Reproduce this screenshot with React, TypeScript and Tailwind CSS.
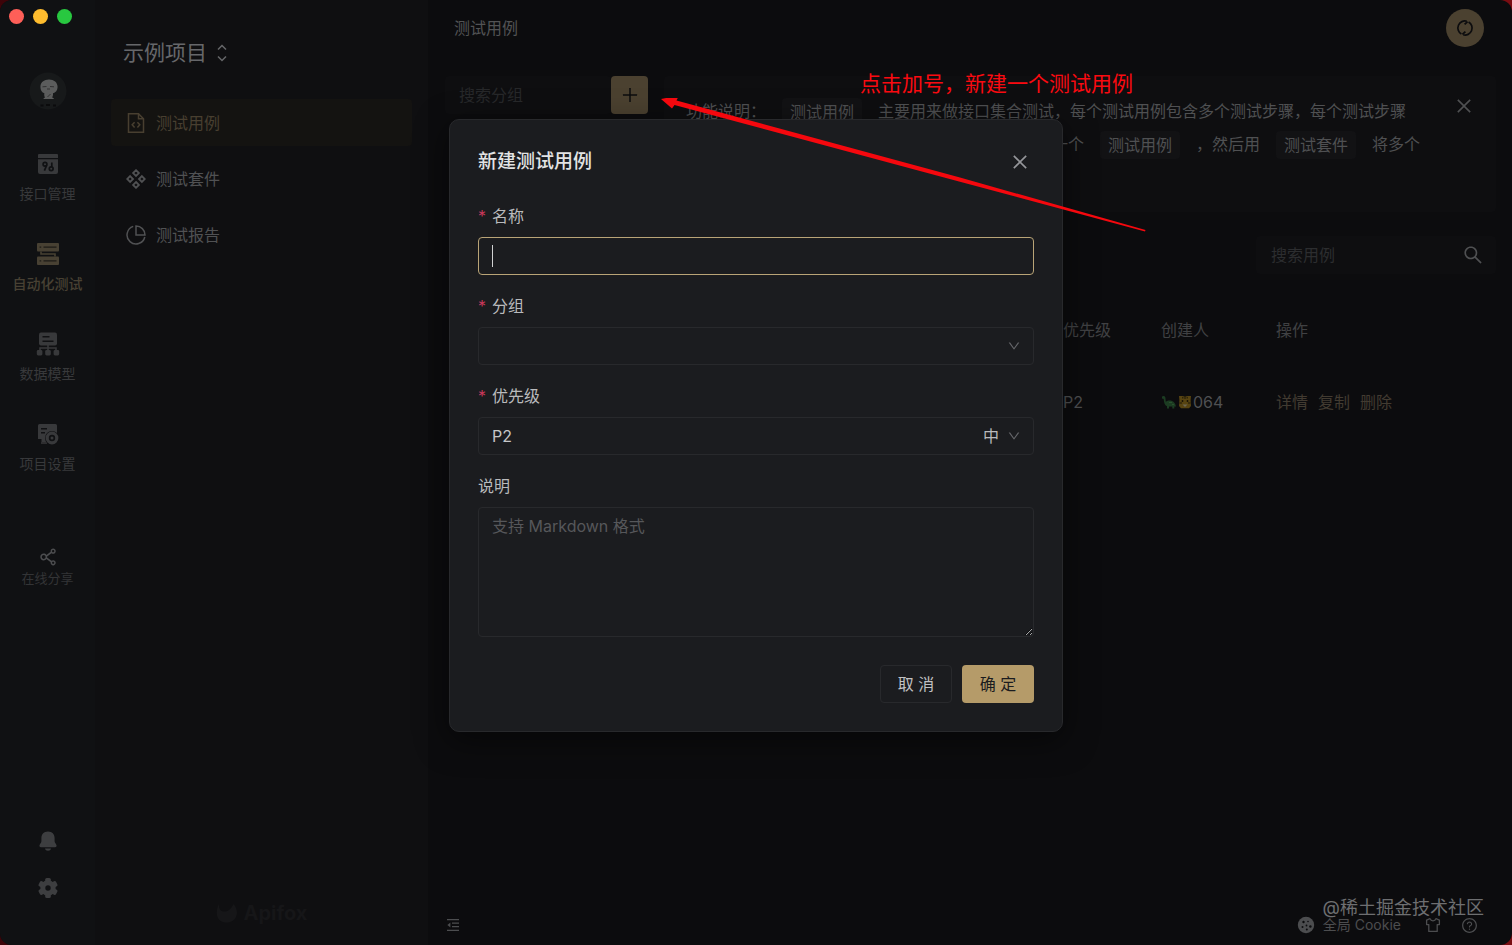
import type { ReactNode } from "react";
import {
  AiOutlineClose,
  AiOutlineDown,
  AiOutlinePlus,
  AiOutlineQuestionCircle,
  AiOutlineSearch,
  AiOutlineShareAlt,
} from "react-icons/ai";

function ApiIcon() {
  return (
    <svg viewBox="0 0 22 22" className="size-[22px]" fill="currentColor" aria-hidden="true">
      <path d="M2 1h18a1 1 0 0 1 1 1v3H1V2a1 1 0 0 1 1-1z" />
      <path d="M1 6.2h20V19a2 2 0 0 1-2 2H3a2 2 0 0 1-2-2z" />
      <g fill="none" stroke="#101113" strokeWidth="1.7">
        <circle cx="8" cy="11.2" r="1.9" />
        <path d="M9.6 12.4 7.4 17.6" />
        <circle cx="14.2" cy="15.8" r="1.9" />
        <path d="M14.8 13.8V9.4" />
      </g>
    </svg>
  );
}

function AutoTestIcon() {
  return (
    <svg viewBox="0 0 24 24" className="size-6" aria-hidden="true">
      <g fill="currentColor">
        <rect x="1" y="1" width="22" height="8.4" rx="1" />
        <rect x="1" y="14.6" width="22" height="8.4" rx="1" />
      </g>
      <path d="M5 9.4v2.6h14v2.6" fill="none" stroke="currentColor" strokeWidth="1.6" />
      <g stroke="#1d1b17" strokeWidth="1.2">
        <path d="M7.5 5.2h13M7.5 18.8h13M3.6 5.2h1.6M3.6 18.8h1.6" />
      </g>
    </svg>
  );
}

function ModelIcon() {
  return (
    <svg viewBox="0 0 24 24" className="size-6" fill="currentColor" aria-hidden="true">
      <rect x="3" y="0.5" width="18" height="13" rx="2" />
      <path d="M6.5 4.8h7M6.5 9.2h11" stroke="#101113" strokeWidth="1.6" />
      <path d="M12 13v5M4 19v-3h16v3" fill="none" stroke="currentColor" strokeWidth="1.6" />
      <rect x="0.8" y="18" width="5.6" height="5.4" rx="1.4" />
      <rect x="9.2" y="18" width="5.6" height="5.4" rx="1.4" />
      <rect x="17.6" y="18" width="5.6" height="5.4" rx="1.4" />
    </svg>
  );
}

function ProjectIcon() {
  return (
    <svg viewBox="0 0 22 22" className="size-[22px]" aria-hidden="true">
      <path d="M2.5 1h16A1.5 1.5 0 0 1 20 2.5V19H4.5v-3H1V2.5A1.5 1.5 0 0 1 2.5 1z" fill="currentColor" />
      <path d="M4 5.8h6M4 9.8h4" stroke="#101113" strokeWidth="1.5" />
      <path d="M4 20h6" stroke="currentColor" strokeWidth="1.5" />
      <circle cx="15" cy="15" r="7" fill="#101113" />
      <circle cx="15" cy="15" r="4.8" fill="none" stroke="currentColor" strokeWidth="3.2" />
      <circle cx="15" cy="15" r="1.5" fill="currentColor" />
    </svg>
  );
}

function BellIcon() {
  return (
    <svg viewBox="0 0 20 22" className="h-[22px] w-5" fill="currentColor" aria-hidden="true">
      <path d="M10 1.5c4 0 6.6 2.8 6.600 6.500v3.200c0 1.600 2 3 2 4.600 0 .9-.6 1.400-1.500 1.400H2.900c-.9 0-1.500-.5-1.500-1.400 0-1.600 2-3 2-4.600V8c0-3.700 2.600-6.500 6.600-6.500z" />
      <path d="M7 18.600h6c-.3 1.400-1.400 2.200-3 2.200s-2.700-.8-3-2.200z" />
    </svg>
  );
}

function GearIcon() {
  const teeth = [0, 60, 120, 180, 240, 300];
  return (
    <svg viewBox="0 0 22 22" className="size-[22px]" aria-hidden="true">
      <circle cx="11" cy="11" r="5.2" fill="none" stroke="currentColor" strokeWidth="5" />
      {teeth.map((a) => (
        <rect key={a} x="8.200" y="1" width="5.600" height="5" rx="1.500" fill="currentColor" transform={`rotate(${a} 11 11)`} />
      ))}
    </svg>
  );
}

function CaseIcon() {
  return (
    <svg viewBox="0 0 20 22" className="h-[22px] w-5" fill="none" stroke="currentColor" strokeWidth="1.5" aria-hidden="true">
      <path d="M2.500 1.800h10l5 5v13.400h-15z" />
      <path d="M12.500 1.800v5h5" />
      <path d="m8.600 10.200-2.400 2.600 2.400 2.600M11.400 10.200l2.400 2.600-2.400 2.600" />
    </svg>
  );
}

function SuiteIcon() {
  return (
    <svg viewBox="0 0 20 20" className="size-5" fill="none" stroke="currentColor" strokeWidth="1.8" aria-hidden="true">
      <path d="m10 1.200 2.900 2.900L10 7 7.100 4.100zM10 13l2.900 2.900-2.900 2.900-2.900-2.900zM4.100 7.100 7 10l-2.900 2.900L1.200 10zM15.900 7.100l2.900 2.900-2.900 2.900L13 10z" />
    </svg>
  );
}

function ReportIcon() {
  return (
    <svg viewBox="0 0 20 20" className="size-5" fill="none" stroke="currentColor" strokeWidth="1.5" aria-hidden="true">
      <path d="M7.200 1.400A9 9 0 1 0 18.800 12" />
      <path d="M10 1a9 9 0 0 1 9 9h-9z" />
    </svg>
  );
}

function SyncIcon() {
  return (
    <svg viewBox="0 0 18 18" className="size-[18px]" fill="none" stroke="currentColor" strokeWidth="1.7" aria-hidden="true">
      <path d="M5.400 15A7 7 0 0 1 10.800 2.200M12.600 3A7 7 0 0 1 7.200 15.800" />
      <path d="M8.600 5.400 11.600 2.600M9.400 12.600 6.400 15.400" strokeWidth="1.8" />
    </svg>
  );
}

function CookieIcon() {
  return (
    <svg viewBox="0 0 18 18" className="size-[18px]" aria-hidden="true">
      <circle cx="9" cy="9" r="8.200" fill="currentColor" />
      <g fill="#0c0c0e">
        <circle cx="6.500" cy="6" r="1.200" />
        <circle cx="11" cy="5.500" r=".8" />
        <circle cx="5.500" cy="11" r="1" />
        <circle cx="9.500" cy="9.500" r=".9" />
        <circle cx="13.400" cy="10.500" r="1.200" />
        <circle cx="9.800" cy="13.600" r="1" />
      </g>
    </svg>
  );
}

function ShirtIcon() {
  return (
    <svg viewBox="0 0 16 16" className="size-4" fill="none" stroke="currentColor" strokeWidth="1.3" strokeLinejoin="round" aria-hidden="true">
      <path d="M5 1.600 1.600 3.200v4.400h2.200v6.800h8.400V7.600h2.200V3.200L11 1.600C10.500 3 9.500 3.800 8 3.800S5.500 3 5 1.600z" />
    </svg>
  );
}

function FoldIcon() {
  return (
    <svg viewBox="0 0 12 12" className="size-3" aria-hidden="true">
      <path d="M0 .7h12M5 4.200h7M5 7.700h7M0 11.300h12" stroke="currentColor" strokeWidth="1.300" />
      <path d="M3.400 3.600v4.800L.4 6z" fill="currentColor" />
    </svg>
  );
}

function Avatar() {
  return (
    <svg viewBox="0 0 38 38" className="size-[38px]" role="img" aria-label="用户头像">
      <circle cx="19" cy="19" r="18.500" fill="#17191a" />
      <path d="M20 7.500c5 0 8.600 3 8.600 7.400 0 3.500-2 5.600-4.600 6.400.2 2-.3 3-.8 4.200 1.800.5 2 1.600 1.400 1.600h-9.800c-.8 0-.3-1.200 1.200-1.600-.8-1.400-1-2.800-.6-4.200-2.500-.9-4-3.200-4-6.400 0-4.500 3.600-7.400 8.600-7.400z" fill="#5b5c5c" />
      <path d="m13.500 14.800 4-.3M21 14.500l4 .3M18 17h3M18.500 25l3-3" stroke="#2c2d2e" strokeWidth=".9" />
      <path d="M11.500 33.500h3M17 33h4M24 33.500h3" stroke="#0b0b0c" strokeWidth="2.200" />
    </svg>
  );
}

function DinoIcon() {
  return (
    <svg viewBox="0 0 16 16" className="size-4" aria-hidden="true">
      <path d="M1 2.600c1.300-1.200 3.200-.6 3.400 1.200l.4 4C6.300 6.600 9 6 11 7c2.200 1 3.300 2.600 4 5.400h-1.700v2h-2v-2H8v2H6v-2.200C3.600 11.200 2.900 8.600 2.700 5L1 4.400z" fill="#1c3c22" />
      <path d="M8 8.500h3M11 10.500h2" stroke="#28512d" />
    </svg>
  );
}

function TigerIcon() {
  return (
    <svg viewBox="0 0 16 16" className="size-4" aria-hidden="true">
      <path d="M2 2h3l3 .6 3-.6h3l-.4 4 .4 6-2 2.200H4L2 12l.4-6z" fill="#574411" />
      <path d="M8 2v3M5.800 3v1.500M10.200 3v1.500M2.500 9H5M11 9h2.500" stroke="#1c1608" />
      <circle cx="5.500" cy="7" r=".9" fill="#151006" />
      <circle cx="10.500" cy="7" r=".9" fill="#151006" />
      <path d="M5.500 10.500h5L8 13z" fill="#6b6552" />
    </svg>
  );
}

function RailItem({ icon, label, active }: { icon: ReactNode; label: string; active?: boolean }) {
  return (
    <a
      href="#"
      className={`flex h-[90px] flex-col items-center gap-2 text-sm leading-5 ${active ? "font-medium text-[#484133]" : "text-[#38393b]"}`}
    >
      <span className="flex size-6 items-center justify-center">{icon}</span>
      {label}
    </a>
  );
}

function MenuItem({ icon, label, active }: { icon: ReactNode; label: string; active?: boolean }) {
  return (
    <a
      href="#"
      className={`flex h-[47px] items-center gap-2.5 rounded px-[15px] text-base ${active ? "bg-[#141311] text-[#483f30]" : "text-[#505153]"}`}
    >
      <span className="flex w-5 justify-center">{icon}</span>
      {label}
    </a>
  );
}

function Chip({ children }: { children: ReactNode }) {
  return <code className="rounded bg-[#121214] px-2 py-1 font-['Inter','Noto_Sans_CJK_SC',sans-serif] leading-5">{children}</code>;
}

function Label({ htmlFor, children, required }: { htmlFor: string; children: ReactNode; required?: boolean }) {
  return (
    <label htmlFor={htmlFor} className="mb-[9px] flex gap-1.5 text-base leading-6 text-[#b9babc]">
      {required && <span className="text-[#c8385a]">*</span>}
      {children}
    </label>
  );
}

function Dialog() {
  return (
    <div className="absolute inset-0 z-10 flex items-start justify-center pt-[119px]">
      <form
        role="dialog"
        aria-labelledby="dialog-title"
        className="w-[614px] rounded-[10px] border border-[#28292c] bg-[#1b1c1f] px-7 py-7 shadow-[0_8px_32px_rgba(0,0,0,0.5)]"
      >
        <div className="mb-7 flex h-7 items-center justify-between">
          <h2 id="dialog-title" className="text-[19px] font-medium text-[#e2e3e4]">
            新建测试用例
          </h2>
          <button type="button" aria-label="关闭" className="p-1 text-xl text-[#95969a]">
            <AiOutlineClose />
          </button>
        </div>

        <div className="mb-[19px]">
          <Label htmlFor="name" required>名称</Label>
          <div className="relative">
            <input id="name" className="block h-[38px] w-full rounded border border-[#b9a477] bg-transparent px-[13px] text-base text-[#c5c6c8] caret-transparent outline-none" />
            <span className="absolute inset-y-2 left-3.5 w-px bg-[#d0d1d2]" />
          </div>
        </div>

        <div className="mb-[19px]">
          <Label htmlFor="group" required>分组</Label>
          <div className="relative">
            <select id="group" className="block h-[38px] w-full appearance-none rounded border border-[#28292c] bg-transparent px-[13px] text-base text-[#c5c6c8]">
              <option value="" />
            </select>
            <AiOutlineDown className="pointer-events-none absolute top-3 right-[13px] size-3.5 text-[#66676b]" />
          </div>
        </div>

        <div className="mb-[19px]">
          <Label htmlFor="priority" required>优先级</Label>
          <div className="relative">
            <select id="priority" className="block h-[38px] w-full appearance-none rounded border border-[#28292c] bg-transparent px-[13px] text-base text-[#c5c6c8]">
              <option>P2</option>
            </select>
            <span className="pointer-events-none absolute inset-y-0 right-[13px] flex items-center gap-2 text-base text-[#b9babc]">
              中
              <AiOutlineDown className="size-3.5 text-[#66676b]" />
            </span>
          </div>
        </div>

        <Label htmlFor="description">说明</Label>
        <textarea
          id="description"
          placeholder="支持 Markdown 格式"
          className="block h-[130px] w-full resize-y rounded border border-[#28292c] bg-transparent px-[13px] py-1.5 text-base leading-6 text-[#c5c6c8] scheme-dark placeholder:text-[#56575a]"
        />

        <div className="mt-7 flex justify-end gap-2.5">
          <button type="button" className="h-[38px] w-[72px] rounded border border-[#28292c] text-base text-[#c0c1c3]">
            取 消
          </button>
          <button type="submit" className="h-[38px] w-[72px] rounded bg-[#b59b69] text-base text-[#1b1c1f]">
            确 定
          </button>
        </div>
      </form>
    </div>
  );
}

function Annotation() {
  return (
    <div className="pointer-events-none absolute top-[70px] left-[660px] z-20">
      <p className="pl-[200px] text-[21px] leading-7 whitespace-nowrap text-[#fa0a10]">点击加号，新建一个测试用例</p>
      <svg viewBox="0 28 490 136" className="block h-[136px] w-[490px]" aria-hidden="true">
        <path d="M1 29 19 25.500 16.500 30.500 300 107.500 485.500 160 485 161.500 299 111.500 14.500 35 12 38.500z" fill="#f5080e" />
      </svg>
    </div>
  );
}

export default function App() {
  return (
    <div className="bg-[linear-gradient(90deg,#3d0409,#7a0d12)] font-['Inter','Noto_Sans_CJK_SC',sans-serif]">
      <div className="relative flex min-h-screen overflow-hidden rounded-xl bg-[#0c0c0e]">
        <nav className="flex w-[95px] shrink-0 flex-col bg-[#101113]">
          <div className="flex gap-[9px] px-[9px] pt-[9px]">
            <span className="size-[15px] rounded-full bg-[#fe5f58]" />
            <span className="size-[15px] rounded-full bg-[#febc2e]" />
            <span className="size-[15px] rounded-full bg-[#28c840]" />
          </div>
          <div className="mt-12 mb-[42px] flex justify-center">
            <Avatar />
          </div>
          <RailItem icon={<ApiIcon />} label="接口管理" />
          <RailItem icon={<AutoTestIcon />} label="自动化测试" active />
          <RailItem icon={<ModelIcon />} label="数据模型" />
          <RailItem icon={<ProjectIcon />} label="项目设置" />
          <a href="#" className="mt-[34px] flex flex-col items-center text-[13px] leading-5 text-[#333436]">
            <AiOutlineShareAlt className="size-[22px] text-[#4c4d4f]" />
            在线分享
          </a>
          <div className="mt-auto flex flex-col items-center gap-[25px] pb-[46px] text-[#3d3e40]">
            <button type="button" aria-label="通知"><BellIcon /></button>
            <button type="button" aria-label="设置"><GearIcon /></button>
          </div>
        </nav>

        <aside className="flex w-[333px] shrink-0 flex-col bg-[#0f0f11] px-4">
          <button type="button" className="mt-[38px] mb-[31px] flex h-[30px] items-center gap-2.5 px-3 text-[21px] text-[#66676a]">
            示例项目
            <svg viewBox="0 0 10 18" className="h-[18px] w-2.5" fill="none" stroke="currentColor" strokeWidth="1.5" aria-hidden="true">
              <path d="m1 5.500 4-4 4 4M1 12.500l4 4 4-4" />
            </svg>
          </button>
          <div className="flex flex-col gap-[9px]">
            <MenuItem icon={<CaseIcon />} label="测试用例" active />
            <MenuItem icon={<SuiteIcon />} label="测试套件" />
            <MenuItem icon={<ReportIcon />} label="测试报告" />
          </div>
          <div className="mt-auto mb-[18px] flex items-center justify-center gap-1.5 text-xl leading-7 font-bold text-[#161618]">
            <svg viewBox="0 0 22 20" className="h-5 w-[22px]" fill="currentColor" aria-hidden="true">
              <path d="M3 1c-.5 4 1 7 4.500 7.500C12 9 15 6 17.500 1 21 5 22 10 20 14c-2 4-5.500 5.500-9.500 5.500S3 18 1.500 14C0 10 1 4 3 1z" />
            </svg>
            Apifox
          </div>
        </aside>

        <main className="flex min-w-0 flex-1 flex-col pr-4 pl-[17px]">
          <header className="flex h-14 items-center justify-between pr-3 pl-[9px]">
            <h1 className="text-base text-[#525355]">测试用例</h1>
            <button type="button" aria-label="刷新" className="flex size-[38px] items-center justify-center rounded-full bg-[#4b4130] text-[#0c0c0e]">
              <SyncIcon />
            </button>
          </header>

          <div className="mt-5 flex gap-4">
            <div className="flex h-[38px] w-[203px] shrink-0">
              <input aria-label="搜索分组" placeholder="搜索分组" className="min-w-0 flex-1 rounded bg-[#0e0e10] px-3.5 text-base placeholder:text-[#27282a]" />
              <button type="button" aria-label="新建" className="flex w-[37px] items-center justify-center rounded bg-[#4b4130] text-xl text-[#0c0c0e]">
                <AiOutlinePlus />
              </button>
            </div>

            <section className="min-w-0 flex-1">
              <div className="relative h-[136px] rounded bg-[#0e0e10] pt-[19px] pr-[76px] pl-[22px] text-base leading-[33px] text-[#4f5052]">
                <p className="flex items-center gap-4 whitespace-nowrap">
                  <span>功能说明：</span>
                  <Chip>测试用例</Chip>
                  <span>主要用来做接口集合测试，每个测试用例包含多个测试步骤，每个测试步骤</span>
                </p>
                <p className="flex items-center justify-end gap-4 whitespace-nowrap">
                  <span>一个</span>
                  <Chip>测试用例</Chip>
                  <span>，然后用</span>
                  <Chip>测试套件</Chip>
                  <span>将多个</span>
                </p>
                <button type="button" aria-label="关闭说明" className="absolute top-5 right-[22px] text-xl">
                  <AiOutlineClose />
                </button>
              </div>

              <div className="mt-6 ml-auto flex h-[38px] w-[240px] items-center rounded bg-[#0e0e10] pr-3 pl-[15px]">
                <input aria-label="搜索用例" placeholder="搜索用例" className="min-w-0 flex-1 bg-transparent text-base placeholder:text-[#2c2d2f]" />
                <AiOutlineSearch className="size-[22px] text-[#4f5052]" />
              </div>

              <table className="mt-5 w-full table-fixed text-left text-base whitespace-nowrap">
                <thead>
                  <tr className="h-[72px] text-[#404143]">
                    <th aria-label="用例" />
                    <th className="w-[98px] font-normal">优先级</th>
                    <th className="w-[115px] font-normal">创建人</th>
                    <th className="w-[220px] font-normal">操作</th>
                  </tr>
                </thead>
                <tbody>
                  <tr className="h-[72px] text-[#4f5052]">
                    <td />
                    <td>P2</td>
                    <td>
                      <span className="flex items-center">
                        <DinoIcon />
                        <TigerIcon />
                        064
                      </span>
                    </td>
                    <td>
                      <span className="flex gap-2.5 text-[#423b31]">
                        <a href="#">详情</a>
                        <a href="#">复制</a>
                        <a href="#">删除</a>
                      </span>
                    </td>
                  </tr>
                </tbody>
              </table>
            </section>
          </div>

          <footer className="mt-auto flex h-10 items-center justify-between pr-[18px] text-[#4c4d4f]">
            <button type="button" aria-label="收起侧栏" className="px-0.5"><FoldIcon /></button>
            <div className="flex items-center gap-6">
              <button type="button" className="flex items-center gap-2 text-sm">
                <CookieIcon />
                全局 Cookie
              </button>
              <div className="flex items-center gap-5">
                <button type="button" aria-label="主题"><ShirtIcon /></button>
                <button type="button" aria-label="帮助"><AiOutlineQuestionCircle className="size-[17px]" /></button>
              </div>
            </div>
          </footer>
        </main>

        <Dialog />
        <Annotation />
        <p className="absolute right-7 bottom-[23px] z-20 text-[18px] leading-7 text-[#6e6f71]">@稀土掘金技术社区</p>
      </div>
    </div>
  );
}
